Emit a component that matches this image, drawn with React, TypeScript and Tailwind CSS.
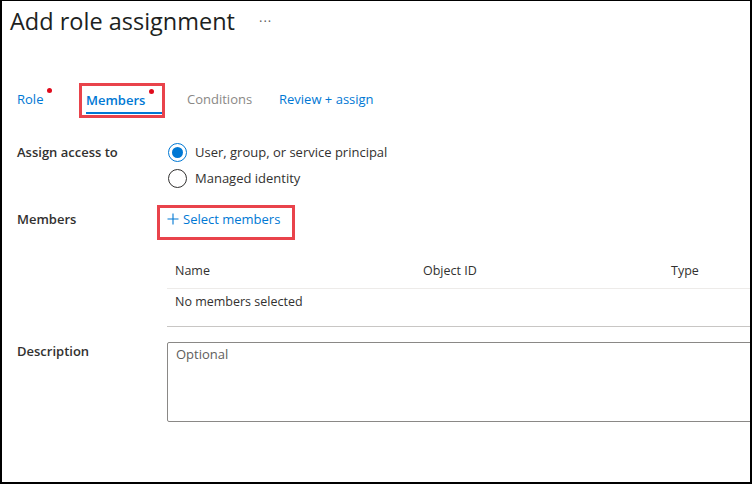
import React from "react";

const font = { fontFamily: '"Segoe UI", "Open Sans", "Liberation Sans", sans-serif' };

export default function App() {
  return (
    <div
      className="w-[752px] h-[484px] bg-white border-black border-t border-l-2 border-r-2 border-b-2 overflow-hidden text-[#323130]"
      style={font}
    >
      <div className="flex items-center pl-[8px] pt-[3px] h-[36px]">
        <h1 className="text-[23.5px] leading-[30px] font-normal text-[#201f1e]">Add role assignment</h1>
        <span className="ml-[24px] text-[13px] leading-[13px] text-[#605e5c] tracking-[1px] mt-[2px]">···</span>
      </div>

      {/* Tabs */}
      <div className="flex items-center h-[35px] mt-[46px] pl-[15px] text-[13px] leading-[20px]">
        <div className="w-[62px] h-full flex items-center pb-[3px]">
          <div className="relative text-[#0078d4] pr-[8px]">
            Role
            <span className="absolute right-[-1px] top-[-1px] w-[5px] h-[5px] rounded-full bg-[#e00b1c]" />
          </div>
        </div>
        <div className="border-[3px] border-[#e9434b] h-[35px] w-[86px] flex pl-[4px]">
          <div className="relative flex-1 h-full flex items-center pb-[1px] font-semibold text-[#0078d4]">
            <span className="relative">
              Members
              <span className="absolute right-[-9px] top-[-1px] w-[5px] h-[5px] rounded-full bg-[#e00b1c]" />
            </span>
            <span className="absolute left-0 right-0 bottom-[1px] h-[2px] bg-[#0078d4]" />
          </div>
        </div>
        <div className="ml-[22px] w-[92px] text-[#8a8886] pb-[3px]">Conditions</div>
        <div className="text-[#0078d4] pb-[3px]">Review + assign</div>
      </div>

      {/* Assign access to */}
      <div className="flex mt-[24px] pl-[15px] text-[13px] leading-[20px]">
        <div className="w-[151px] font-semibold text-[#323130]">Assign access to</div>
        <div className="flex flex-col gap-[6px]">
          <div className="flex items-center gap-[8px] h-[20px]">
            <span className="w-[19px] h-[19px] rounded-full border border-[#0078d4] flex items-center justify-center">
              <span className="w-[11px] h-[11px] rounded-full bg-[#0078d4]" />
            </span>
            <span>User, group, or service principal</span>
          </div>
          <div className="flex items-center gap-[8px] h-[20px]">
            <span className="w-[19px] h-[19px] rounded-full border border-[#323130]" />
            <span>Managed identity</span>
          </div>
        </div>
      </div>

      {/* Members */}
      <div className="flex mt-[17px] pl-[15px] text-[13px] leading-[20px]">
        <div className="w-[140px] font-semibold pt-[4px]">Members</div>
        <div className="border-[3px] border-[#e9434b] w-[138px] h-[35px] flex items-start pl-[7px] pt-[1px] text-[#0078d4]">
          <span className="flex items-center gap-[4px] h-[20px]">
            <svg width="12" height="12" viewBox="0 0 12 12">
              <path d="M6 0.5V11.5M0.5 6H11.5" stroke="#0078d4" strokeWidth="1.1" />
            </svg>
            <span>Select members</span>
          </span>
        </div>
      </div>

      {/* Table */}
      <div className="ml-[165px] mt-[13px] text-[12.5px] leading-[20px]">
        <div className="flex items-center h-[36px] border-b border-[#edebe9] pl-[8px]">
          <div className="w-[248px]">Name</div>
          <div className="w-[248px]">Object ID</div>
          <div>Type</div>
        </div>
        <div className="h-[38px] border-b border-[#c8c6c4] pl-[8px] pt-[3px]">No members selected</div>
      </div>

      {/* Description */}
      <div className="flex mt-[15px] pl-[15px] text-[13px] leading-[20px]">
        <div className="w-[150px] font-semibold -mt-[1px]">Description</div>
        <div className="flex-1 h-[80px] border border-[#8a8886] rounded-[2px] px-[8px] pt-[1px] text-[#605e5c] -mr-[20px]">
          Optional
        </div>
      </div>
    </div>
  );
}
